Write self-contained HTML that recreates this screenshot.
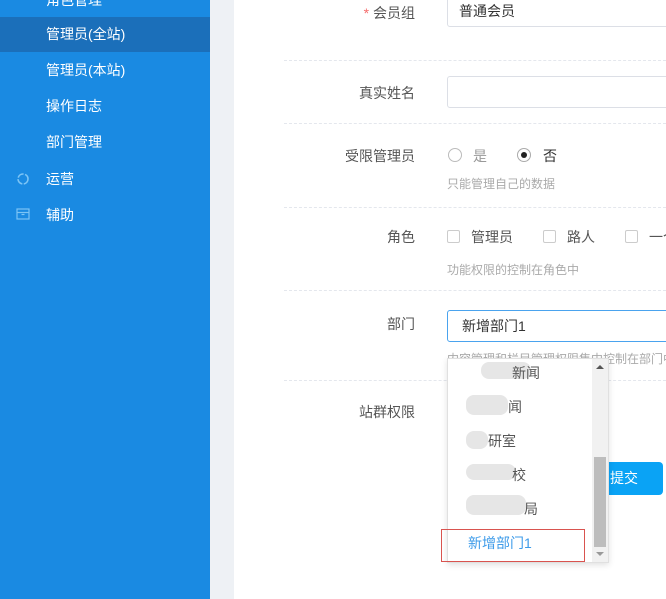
<!DOCTYPE html>
<html><head><meta charset="utf-8"><style>
*{margin:0;padding:0;box-sizing:border-box}
body{width:666px;height:599px;overflow:hidden;background:#fff;font-family:"Liberation Sans","Noto Sans CJK SC",sans-serif;font-size:14px;color:#333;position:relative}
.side{position:absolute;left:0;top:0;width:210px;height:599px;background:#1a8ae2}
.gap{position:absolute;left:210px;top:0;width:24px;height:599px;background:#eef1f5}
.mi{position:absolute;left:46px;color:#fff;font-size:14px;line-height:20px}
.act{position:absolute;left:0;top:17px;width:210px;height:35px;background:#1b6fba}
.a{position:absolute}
.lbl{position:absolute;right:251px;font-size:14px;color:#555;text-align:right;white-space:nowrap}
.inp{position:absolute;left:447px;width:240px;height:32px;border:1px solid #dcdfe6;border-radius:3px;padding-left:11px;line-height:30px;color:#333}
.dash{position:absolute;left:284px;width:382px;border-top:1px dashed #e4e7ed}
.hint{position:absolute;left:447px;font-size:12px;color:#aaa;white-space:nowrap}
.rad{position:absolute;width:14px;height:14px;border:1px solid #bbb;border-radius:50%}
.cb{position:absolute;width:13px;height:13px;border:1px solid #ccc;border-radius:2px}
.dd{position:absolute;left:447px;top:358px;width:162px;height:205px;background:#fff;border:1px solid #e0e0e0;box-shadow:0 2px 6px rgba(0,0,0,.12);overflow:hidden}
.it{position:absolute;font-size:14px;color:#555;white-space:nowrap}
.blob{position:absolute;background:#e6e6e6;border-radius:8px}
</style></head><body>
<div class="side">
<div class="mi" style="top:-10px">角色管理</div>
<div class="act"></div>
<div class="mi" style="top:24px">管理员(全站)</div>
<div class="mi" style="top:60px">管理员(本站)</div>
<div class="mi" style="top:96px">操作日志</div>
<div class="mi" style="top:132px">部门管理</div>
<svg class="a" style="left:16px;top:172px" width="14" height="14" viewBox="0 0 14 14"><circle cx="7" cy="7" r="5" fill="none" stroke="#7cc4f5" stroke-width="1.6" stroke-dasharray="7 1.5"/></svg>
<div class="mi" style="top:169px">运营</div>
<svg class="a" style="left:16px;top:208px" width="14" height="12" viewBox="0 0 14 12"><rect x="1" y="1" width="12" height="10" fill="none" stroke="#7cc4f5" stroke-width="1.2"/><line x1="1" y1="4.5" x2="13" y2="4.5" stroke="#7cc4f5" stroke-width="1.2"/><line x1="5.5" y1="6.5" x2="8.5" y2="6.5" stroke="#7cc4f5" stroke-width="1.2"/></svg>
<div class="mi" style="top:205px">辅助</div>
</div>
<div class="gap"></div>

<div class="lbl" style="top:3px"><span style="color:#f56c6c">* </span>会员组</div>
<div class="inp" style="top:-5px">普通会员</div>
<div class="dash" style="top:60px"></div>
<div class="lbl" style="top:83px">真实姓名</div>
<div class="inp" style="top:76px"></div>
<div class="dash" style="top:123px"></div>
<div class="lbl" style="top:146px">受限管理员</div>
<div class="rad" style="left:448px;top:148px"></div><div class="it" style="left:473px;top:146px;color:#999">是</div>
<div class="rad" style="left:517px;top:148px;border-color:#aaa"><div style="position:absolute;left:3px;top:3px;width:6px;height:6px;border-radius:50%;background:#222"></div></div><div class="it" style="left:543px;top:146px;color:#333">否</div>
<div class="hint" style="top:175px">只能管理自己的数据</div>
<div class="dash" style="top:207px"></div>
<div class="lbl" style="top:227px">角色</div>
<div class="cb" style="left:447px;top:230px"></div><div class="it" style="left:471px;top:227px">管理员</div>
<div class="cb" style="left:543px;top:230px"></div><div class="it" style="left:567px;top:227px">路人</div>
<div class="cb" style="left:625px;top:230px"></div><div class="it" style="left:649px;top:227px">一个</div>
<div class="hint" style="top:261px">功能权限的控制在角色中</div>
<div class="dash" style="top:290px"></div>
<div class="lbl" style="top:314px">部门</div>
<div class="inp" style="top:310px;border-color:#4aa3ee;padding-left:14px">新增部门1</div>
<div class="hint" style="top:350px">内容管理和栏目管理权限集中控制在部门中</div>
<div class="dash" style="top:380px"></div>
<div class="lbl" style="top:402px">站群权限</div>
<div class="a" style="left:590px;top:462px;width:73px;height:33px;background:#0aa3f5;border-radius:4px;color:#fff;line-height:33px;padding-left:20px">提交</div>

<div class="dd">
<div class="blob" style="left:33px;top:3px;width:50px;height:17px"></div><div class="it" style="left:64px;top:4px">新闻</div>
<div class="blob" style="left:18px;top:36px;width:42px;height:20px"></div><div class="it" style="left:60px;top:38px">闻</div>
<div class="blob" style="left:18px;top:72px;width:22px;height:18px"></div><div class="it" style="left:40px;top:72px">研室</div>
<div class="blob" style="left:18px;top:105px;width:50px;height:16px"></div><div class="it" style="left:64px;top:106px">校</div>
<div class="blob" style="left:18px;top:136px;width:60px;height:20px"></div><div class="it" style="left:76px;top:140px">局</div>
<div class="it" style="left:20px;top:174px;color:#3d9be9">新增部门1</div>
<div class="a" style="left:144px;top:0;width:16px;height:205px;background:#f1f1f1"></div>
<div class="a" style="left:146px;top:98px;width:12px;height:90px;background:#bdbdbd"></div>
<div class="a" style="left:148px;top:6px;border:4px solid transparent;border-bottom:4px solid #555;border-top:0"></div>
<div class="a" style="left:148px;top:193px;border:4px solid transparent;border-top:4px solid #999;border-bottom:0"></div>
</div>
<div class="a" style="left:441px;top:529px;width:144px;height:33px;border:1px solid #d9534f"></div>
</body></html>
